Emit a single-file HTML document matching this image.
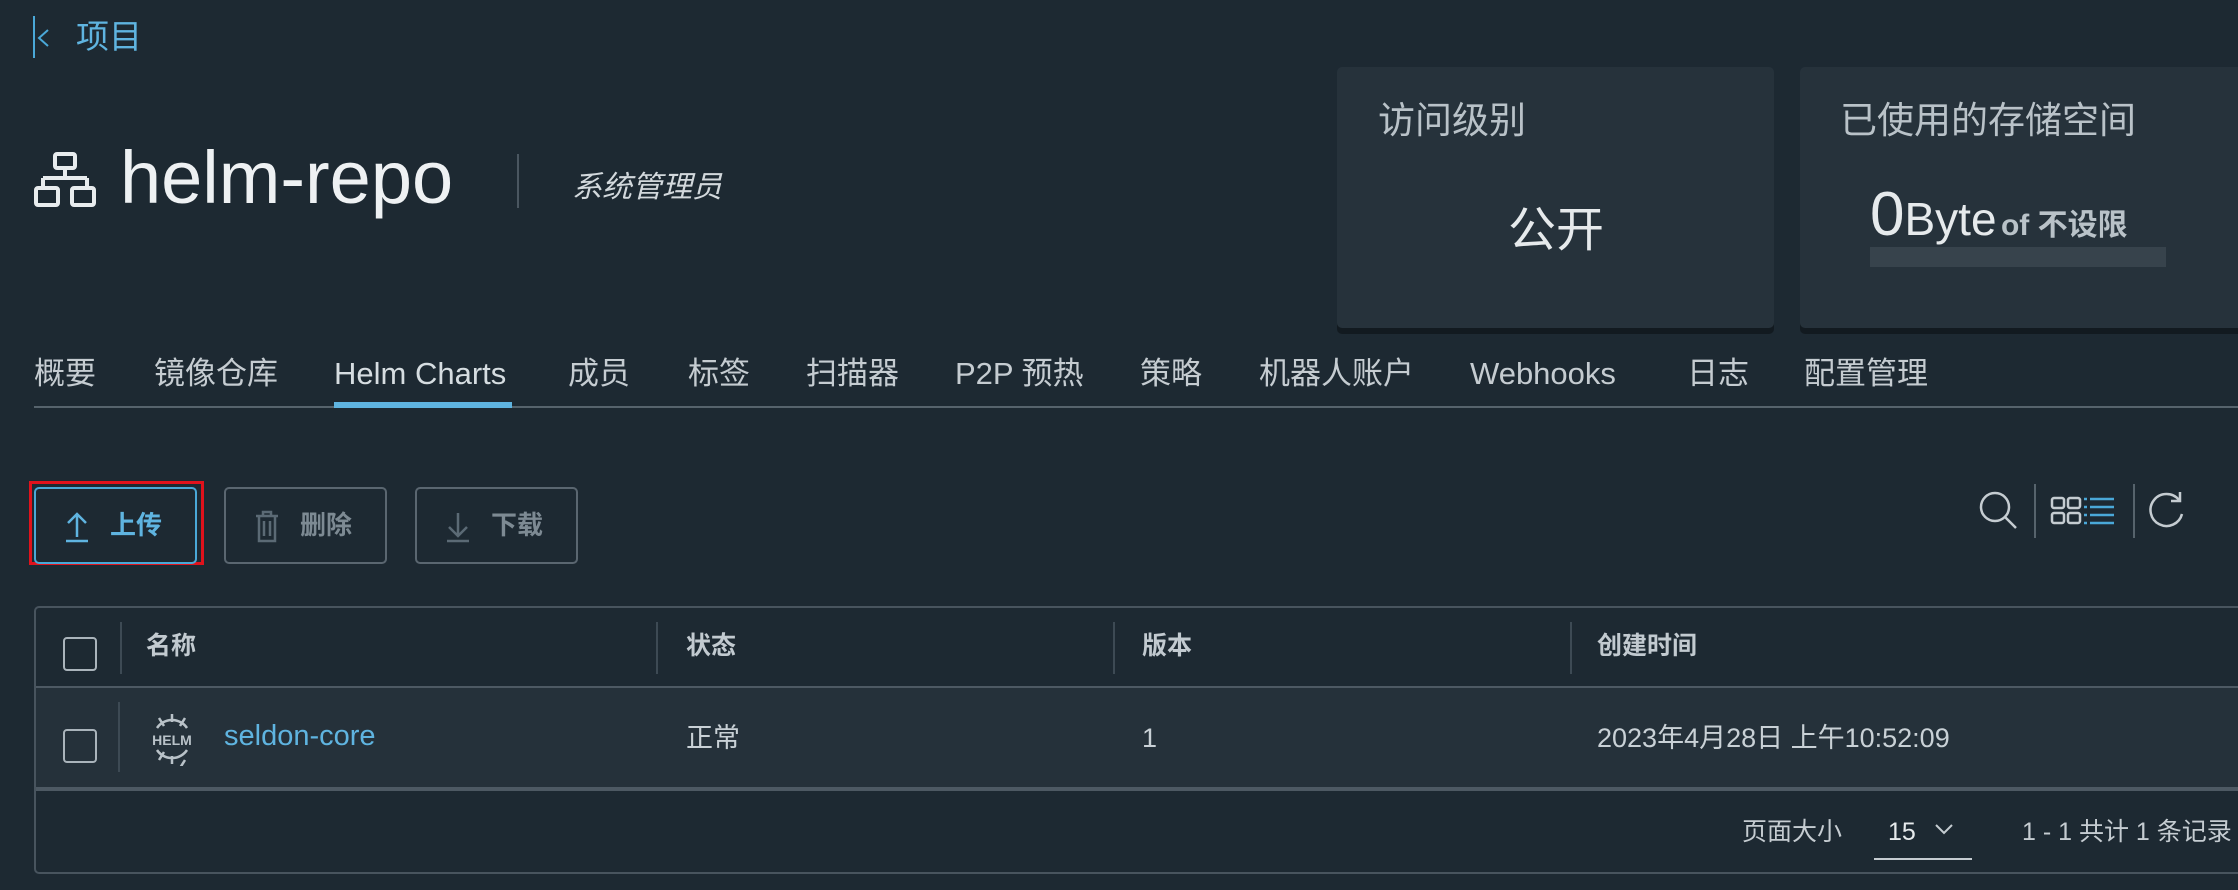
<!DOCTYPE html>
<html><head><meta charset="utf-8"><style>
*{margin:0;padding:0;box-sizing:border-box}
body{width:2238px;height:890px;background:#1d2932;overflow:hidden;position:relative;font-family:"Liberation Sans","Noto Sans CJK SC",sans-serif;color:#c9d1d6;line-height:1.2}
.a{position:absolute;white-space:nowrap}
.card{position:absolute;background:#26323b;border-radius:5px;box-shadow:0 6px 0 #121a20}
.tab{position:absolute;top:355px;font-size:31px;color:#c5ccd1}
.btn{position:absolute;top:487px;height:77px;border:2px solid #5a6670;border-radius:5px;font-size:26px;font-weight:bold;color:#7d8a93}
.th{position:absolute;top:631px;font-size:25px;font-weight:bold;color:#c2cad0}
.td{position:absolute;top:722px;font-size:27px;color:#c9d1d6}
.cb{position:absolute;left:63px;width:34px;height:34px;border:2px solid #aab4bb;border-radius:4px}
.vs{position:absolute;width:2px;background:#3d4a54}
</style></head><body>
<svg class="a" style="left:32px;top:16px" width="22" height="42" viewBox="0 0 22 42" fill="none" stroke="#4aa8d8" stroke-width="2"><path d="M2 0v42M16 14l-9 8 9 8"/></svg>
<div class="a" style="left:76px;top:17px;font-size:33px;color:#5fb4e0">项目</div>

<svg class="a" style="left:34px;top:152px" width="62" height="56" viewBox="0 0 62 56" fill="none" stroke="#e8ecee" stroke-width="4"><rect x="21" y="2" width="20" height="14" rx="2"/><path d="M31 16v10M9 26h44M9 26v8M53 26v8"/><rect x="2" y="36" width="22" height="17" rx="2"/><rect x="38" y="36" width="22" height="17" rx="2"/></svg>
<div class="a" style="left:120px;top:134px;font-size:74px;color:#eef1f3">helm-repo</div>
<div class="a" style="left:517px;top:154px;width:2px;height:54px;background:#4a5660"></div>
<div class="a" style="left:572px;top:170px;font-size:30px;font-style:italic;color:#d2d8dc">系统管理员</div>

<div class="card" style="left:1337px;top:67px;width:437px;height:261px"></div>
<div class="a" style="left:1378px;top:99px;font-size:37px;color:#b9c2c8">访问级别</div>
<div class="a" style="left:1508px;top:202px;font-size:48px;color:#e6eaec">公开</div>
<div class="card" style="left:1800px;top:67px;width:450px;height:261px"></div>
<div class="a" style="left:1840px;top:99px;font-size:37px;color:#b9c2c8">已使用的存储空间</div>
<div class="a" style="left:1870px;top:178px;color:#e6eaec"><span style="font-size:62px">0</span><span style="font-size:46px">Byte</span> <span style="font-size:30px;font-weight:bold;color:#b9c2c8">of 不设限</span></div>
<div class="a" style="left:1870px;top:247px;width:296px;height:20px;background:#37434c"></div>

<div class="tab" style="left:34px">概要</div>
<div class="tab" style="left:154px">镜像仓库</div>
<div class="tab" style="left:334px;color:#d6dde1">Helm Charts</div>
<div class="tab" style="left:568px">成员</div>
<div class="tab" style="left:688px">标签</div>
<div class="tab" style="left:806px">扫描器</div>
<div class="tab" style="left:955px">P2P 预热</div>
<div class="tab" style="left:1140px">策略</div>
<div class="tab" style="left:1259px">机器人账户</div>
<div class="tab" style="left:1470px">Webhooks</div>
<div class="tab" style="left:1687px">日志</div>
<div class="tab" style="left:1804px">配置管理</div>
<div class="a" style="left:34px;top:406px;width:2204px;height:2px;background:#56636c"></div>
<div class="a" style="left:334px;top:402px;width:178px;height:6px;background:#5fb4e0"></div>

<div class="a" style="left:29px;top:481px;width:175px;height:84px;border:3px solid #e0121c"></div>
<div class="btn" style="left:34px;width:163px;border-color:#4aa8d8;color:#5fb4e0">
<svg class="a" style="left:28px;top:22px" width="26" height="32" viewBox="0 0 26 32" fill="none" stroke="#5fb4e0" stroke-width="2.5"><path d="M13 26V3M4 12l9-9 9 9M2 30h22"/></svg>
<span class="a" style="left:74px;top:21px">上传</span></div>
<div class="btn" style="left:224px;width:163px">
<svg class="a" style="left:28px;top:20px" width="26" height="34" viewBox="0 0 26 34" fill="none" stroke="#5b6a75" stroke-width="2.5"><path d="M2 7h22M9 7V3h8v4M5 7v25h16V7M10 12v15M16 12v15"/></svg>
<span class="a" style="left:74px;top:21px">删除</span></div>
<div class="btn" style="left:415px;width:163px">
<svg class="a" style="left:28px;top:22px" width="26" height="32" viewBox="0 0 26 32" fill="none" stroke="#5b6a75" stroke-width="2.5"><path d="M13 2v23M4 16l9 9 9-9M2 30h22"/></svg>
<span class="a" style="left:74px;top:21px">下载</span></div>

<svg class="a" style="left:1978px;top:490px" width="42" height="42" viewBox="0 0 42 42" fill="none" stroke="#c5ccd1" stroke-width="2.5"><circle cx="17" cy="17" r="14"/><path d="M27 27l11 11"/></svg>
<div class="a" style="left:2034px;top:484px;width:2px;height:54px;background:#56636c"></div>
<svg class="a" style="left:2050px;top:496px" width="66" height="30" viewBox="0 0 66 30" fill="none" stroke-width="2.5"><g stroke="#c5ccd1"><rect x="2" y="2" width="12" height="10" rx="2"/><rect x="18" y="2" width="12" height="10" rx="2"/><rect x="2" y="17" width="12" height="10" rx="2"/><rect x="18" y="17" width="12" height="10" rx="2"/></g><g stroke="#4aa8d8"><path d="M34 3h3M40 3h24M34 11h3M40 11h24M34 19h3M40 19h24M34 27h3M40 27h24"/></g></svg>
<div class="a" style="left:2133px;top:484px;width:2px;height:54px;background:#56636c"></div>
<svg class="a" style="left:2146px;top:490px" width="40" height="42" viewBox="0 0 40 42" fill="none" stroke="#c5ccd1" stroke-width="2.5"><path d="M33 10A16 16 0 1 0 36 24"/><path d="M34 2v9h-9"/></svg>

<div class="a" style="left:34px;top:606px;width:2220px;height:268px;border:2px solid #48545e;border-radius:5px"></div>
<div class="a" style="left:36px;top:688px;width:2202px;height:101px;background:#25313a"></div>
<div class="a" style="left:36px;top:686px;width:2202px;height:2px;background:#4d5963"></div>
<div class="a" style="left:36px;top:787px;width:2202px;height:4px;background:#4d5963"></div>
<div class="cb" style="top:637px"></div>
<div class="cb" style="top:729px"></div>
<div class="vs" style="left:120px;top:622px;height:52px"></div>
<div class="vs" style="left:118px;top:702px;height:70px"></div>
<div class="vs" style="left:656px;top:622px;height:52px"></div>
<div class="vs" style="left:1113px;top:622px;height:52px"></div>
<div class="vs" style="left:1570px;top:622px;height:52px"></div>
<div class="th" style="left:146px">名称</div>
<div class="th" style="left:686px">状态</div>
<div class="th" style="left:1142px">版本</div>
<div class="th" style="left:1597px">创建时间</div>
<svg class="a" style="left:145px;top:712px" width="54" height="54" viewBox="0 0 54 54" fill="none" stroke="#b9c2c8" stroke-width="2.5"><path d="M27 2v8M14 6l5 8M40 6l-5 8M12 16a18 18 0 0 1 30 0M12 38a18 18 0 0 0 30 0M27 52v-8M14 48l5-8M40 48l-5 8"/><text x="27" y="33" font-size="14" font-weight="bold" fill="#b9c2c8" stroke="none" text-anchor="middle" font-family="Liberation Sans">HELM</text></svg>
<div class="td" style="left:224px;top:719px;color:#5fb4e0;font-size:29px">seldon-core</div>
<div class="td" style="left:686px">正常</div>
<div class="td" style="left:1142px">1</div>
<div class="td" style="left:1597px">2023年4月28日 上午10:52:09</div>
<div class="a" style="left:1742px;top:817px;font-size:25px;color:#c5ccd1">页面大小</div>
<div class="a" style="left:1888px;top:817px;font-size:25px;color:#e6eaec">15</div>
<svg class="a" style="left:1934px;top:822px" width="20" height="14" viewBox="0 0 20 14" fill="none" stroke="#c5ccd1" stroke-width="2"><path d="M2 3l8 8 8-8"/></svg>
<div class="a" style="left:1874px;top:858px;width:98px;height:2px;background:#c5ccd1"></div>
<div class="a" style="left:2022px;top:817px;font-size:25px;color:#c5ccd1">1 - 1 共计 1 条记录</div>
</body></html>
